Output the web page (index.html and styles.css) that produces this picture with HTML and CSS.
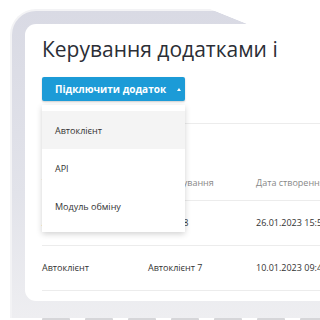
FILE: index.html
```html
<!DOCTYPE html>
<html lang="uk">
<head>
	<meta charset="UTF-8">
	<title>Керування додатками</title>
	<link rel="stylesheet" href="styles.css">
</head>
<body>
	<div class="laptop">
		<div class="bezel">
			<div class="screen">
				<h1 class="title">Керування додатками і API</h1>
				<div class="actions">
					<button class="btn">Підключити додаток <span class="caret"></span></button>
					<ul class="menu">
						<li class="active">Автоклієнт</li>
						<li>API</li>
						<li>Модуль обміну</li>
					</ul>
				</div>
				<div class="toolbar"></div>
				<table class="grid">
					<thead>
						<tr>
							<th class="c1">Тип</th>
							<th class="c2">Найменування</th>
							<th>Дата створення</th>
						</tr>
					</thead>
					<tbody>
						<tr>
							<td>Автоклієнт</td>
							<td>Клієнти 8</td>
							<td>26.01.2023 15:52</td>
						</tr>
						<tr>
							<td>Автоклієнт</td>
							<td>Автоклієнт 7</td>
							<td>10.01.2023 09:41</td>
						</tr>
					</tbody>
				</table>
			</div>
		</div>
		<div class="glare"></div>
	</div>
	<div class="keys">
		<span></span><span></span><span></span><span></span><span></span><span></span><span></span>
	</div>
</body>
</html>
```
FILE: styles.css
```css
* {
	box-sizing: border-box;
}
body {
	margin: 0;
	height: 320px;
	overflow: hidden;
	background: #fff;
	font-family: "Open Sans", sans-serif;
}
.laptop {
	position: relative;
	width: 370px;
	margin: 9px 0 0 10px;
	padding: 2px 0 0 2px;
	background: #f3f3f5;
	border-radius: 26px 26px 0 0;
}
.bezel {
	padding: 13px 0 17px 13px;
	background: linear-gradient(#d9dae4, #e2e3ea 60%, #eeeef1);
	border-radius: 24px 24px 0 0;
}
.screen {
	height: 277px;
	padding: 11px 0 0 17px;
	background: #fff;
	border-radius: 11px;
}
.glare {
	position: absolute;
	top: 0;
	left: 190px;
	width: 140px;
	height: 15px;
	background: linear-gradient(22deg, transparent 26%, #fff 27%);
}
.title {
	width: 238px;
	margin: 0;
	overflow: hidden;
	white-space: nowrap;
	font-size: 21px;
	line-height: 28px;
	font-weight: 500;
	color: #2b2e36;
}
.actions {
	position: relative;
	width: 143px;
	height: 24px;
	margin-top: 14px;
}
.btn {
	display: flex;
	align-items: center;
	width: 143px;
	height: 24px;
	padding: 0 0 0 13px;
	border: 0;
	border-radius: 2px;
	background: #1c9bd7;
	color: #fff;
	font-family: "Open Sans", sans-serif;
	font-size: 10px;
	font-weight: 700;
	box-shadow: 0 1px 2px rgba(0, 0, 0, .2);
}
.caret {
	margin-left: 11px;
	border-left: 2.5px solid transparent;
	border-right: 2.5px solid transparent;
	border-bottom: 3px solid #fff;
}
.menu {
	position: absolute;
	top: 28px;
	left: 0;
	z-index: 2;
	width: 143px;
	margin: 0;
	padding: 6px 0 7px;
	list-style: none;
	background: #fff;
	box-shadow: 0 2px 6px rgba(0, 0, 0, .18);
}
.menu li {
	display: flex;
	align-items: center;
	height: 38px;
	padding-left: 13px;
	font-size: 9px;
	color: #333;
}
.menu li.active {
	background: #f4f4f4;
}
.toolbar {
	width: 300px;
	height: 43px;
	margin-top: 22px;
	border-top: 1px solid #ececec;
}
.grid {
	width: 300px;
	border-collapse: collapse;
	font-size: 9px;
	white-space: nowrap;
}
.grid th {
	height: 34px;
	padding: 0;
	text-align: left;
	font-weight: 400;
	color: #888;
	border-bottom: 1px solid #ececec;
}
.grid td {
	height: 45px;
	padding: 0;
	color: #333;
	border-bottom: 1px solid #ececec;
}
.grid .c1 {
	width: 106px;
}
.grid .c2 {
	width: 108px;
}
.keys {
	display: flex;
	gap: 15px;
	padding: 0 0 0 42px;
}
.keys span {
	flex: none;
	width: 28px;
	height: 3px;
	background: #d6d6d9;
	border-radius: 1px 1px 0 0;
}
```
